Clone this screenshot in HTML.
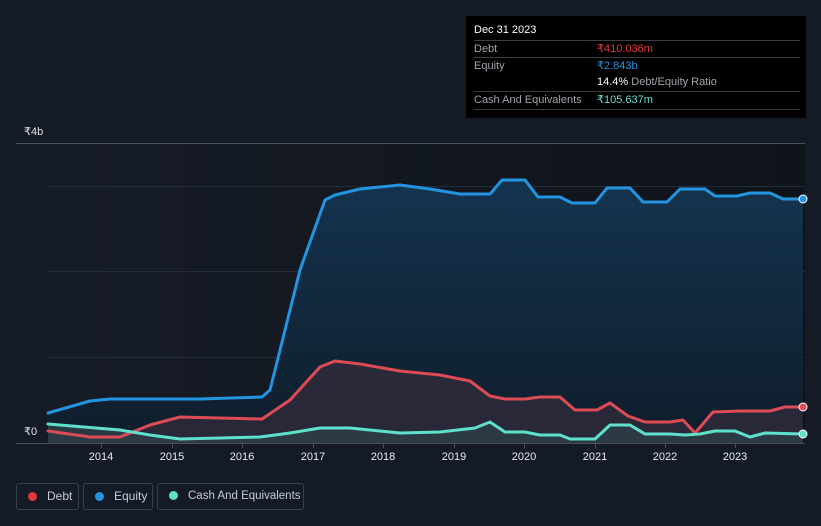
<!DOCTYPE html><html><head><style>
body{margin:0;width:821px;height:526px;background:#151b26;font-family:"Liberation Sans",sans-serif;overflow:hidden;position:relative}
.tt{position:absolute;left:466px;top:16px;width:340px;height:102px;background:#000;color:#fff;font-size:11px}
.tt .r{position:absolute;left:8px;width:326px;border-top:1px solid #3a3d44;height:16px;line-height:16px;color:#a0a4ab}
.leg{position:absolute;top:483px;height:27px;border:1px solid #3a404b;border-radius:3px;color:#c8ccd2;font-size:12px;line-height:25px;box-sizing:border-box;white-space:nowrap;overflow:hidden}
.leg i{display:inline-block;width:9px;height:9px;border-radius:50%;margin:0 10px 0 11px;vertical-align:-1px}
.yl{position:absolute;color:#e0e3e8;font-size:11px}
.xl{position:absolute;top:451px;color:#e8ebef;font-size:11px;width:40px;text-align:center}
</style></head><body>
<svg width="821" height="526" style="position:absolute;left:0;top:0">
<defs>
<linearGradient id="bg" x1="0" x2="1"><stop offset="0" stop-color="#161c26"/><stop offset="1" stop-color="#0f131a"/></linearGradient>
<linearGradient id="eq" x1="0" y1="0" x2="0" y2="1"><stop offset="0" stop-color="#14344f"/><stop offset="1" stop-color="#0f1d2b"/></linearGradient>
</defs>
<rect x="48" y="143" width="757" height="300" fill="url(#bg)"/>
<line x1="16" y1="143.5" x2="805" y2="143.5" stroke="#4a4f59"/>
<g stroke="#262d3a"><line x1="48" y1="186.5" x2="805" y2="186.5"/><line x1="48" y1="271.5" x2="805" y2="271.5"/><line x1="48" y1="357.5" x2="805" y2="357.5"/></g>
<polygon fill="url(#eq)" points="48,413 90,401 110,399 200,399 262,397 270,390 300,270 325,200 335,195 360,189 400,185 430,189 460,194 490,194 502,180 525,180 538,197 560,197 572,203 595,203 607,188 630,188 643,202 667,202 680,189 705,189 715,196 737,196 750,193 770,193 783,199 803,199 803,443 48,443"/>
<polygon fill="#2e2a3a" opacity="0.85" points="48,431 90,437 120,437 150,425 180,417 220,418 262,419 290,400 320,367 335,361 360,364 400,371 440,375 470,381 490,396 505,399 525,399 540,397 560,397 575,410 597,410 610,403 628,416 645,422 670,422 683,420 695,433 713,412 740,411 770,411 785,407 803,407 803,443 48,443"/>
<polygon fill="#2c3d45" opacity="0.9" points="48,424 120,430 150,435 180,439 260,437 290,433 320,428 350,428 400,433 440,432 475,428 490,422 505,432 525,432 540,435 560,435 570,439 595,439 610,425 630,425 645,434 670,434 685,435 700,434 715,431 735,431 750,437 765,433 803,434 803,443 48,443"/>
<g fill="none" stroke-width="3" stroke-linejoin="round" stroke-linecap="round">
<polyline stroke="#2394e0" points="48,413 90,401 110,399 200,399 262,397 270,390 300,270 325,200 335,195 360,189 400,185 430,189 460,194 490,194 502,180 525,180 538,197 560,197 572,203 595,203 607,188 630,188 643,202 667,202 680,189 705,189 715,196 737,196 750,193 770,193 783,199 803,199"/>
<polyline stroke="#dd4b55" points="48,431 90,437 120,437 150,425 180,417 220,418 262,419 290,400 320,367 335,361 360,364 400,371 440,375 470,381 490,396 505,399 525,399 540,397 560,397 575,410 597,410 610,403 628,416 645,422 670,422 683,420 695,433 713,412 740,411 770,411 785,407 803,407"/>
<polyline stroke="#5ee0cc" points="48,424 120,430 150,435 180,439 260,437 290,433 320,428 350,428 400,433 440,432 475,428 490,422 505,432 525,432 540,435 560,435 570,439 595,439 610,425 630,425 645,434 670,434 685,435 700,434 715,431 735,431 750,437 765,433 803,434"/>
</g>
<circle cx="803" cy="199" r="4" fill="#2394e0" stroke="#fff" stroke-width="1"/>
<circle cx="803" cy="407" r="4" fill="#dd4b55" stroke="#fff" stroke-width="1"/>
<circle cx="803" cy="434" r="4" fill="#5ee0cc" stroke="#fff" stroke-width="1"/>
<line x1="16" y1="443.5" x2="805" y2="443.5" stroke="#4a4f59"/>
<g stroke="#4a4f59"><line x1="101.5" y1="443" x2="101.5" y2="448"/><line x1="172.5" y1="443" x2="172.5" y2="448"/><line x1="242.5" y1="443" x2="242.5" y2="448"/><line x1="313.5" y1="443" x2="313.5" y2="448"/><line x1="383.5" y1="443" x2="383.5" y2="448"/><line x1="454.5" y1="443" x2="454.5" y2="448"/><line x1="524.5" y1="443" x2="524.5" y2="448"/><line x1="595.5" y1="443" x2="595.5" y2="448"/><line x1="665.5" y1="443" x2="665.5" y2="448"/><line x1="735.5" y1="443" x2="735.5" y2="448"/></g>
</svg>
<div class="yl" style="left:24px;top:125px">₹4b</div>
<div class="yl" style="left:24px;top:425px">₹0</div>
<div class="xl" style="left:81px">2014</div><div class="xl" style="left:152px">2015</div><div class="xl" style="left:222px">2016</div><div class="xl" style="left:293px">2017</div><div class="xl" style="left:363px">2018</div><div class="xl" style="left:434px">2019</div><div class="xl" style="left:504px">2020</div><div class="xl" style="left:575px">2021</div><div class="xl" style="left:645px">2022</div><div class="xl" style="left:715px">2023</div>
<div class="tt">
<div style="position:absolute;left:8px;top:8px;font-size:11px">Dec 31 2023</div>
<div class="r" style="top:24px">Debt<span style="position:absolute;left:123px;color:#e5383b">₹410.036m</span></div>
<div class="r" style="top:41px">Equity<span style="position:absolute;left:123px;color:#2394e0">₹2.843b</span></div>
<div class="r" style="top:58px;border:none"><span style="position:absolute;left:123px"><b style="color:#fff;font-weight:normal">14.4%</b> Debt/Equity Ratio</span></div>
<div class="r" style="top:75px">Cash And Equivalents<span style="position:absolute;left:123px;color:#5ee0cc">₹105.637m</span></div>
<div class="r" style="top:93px;height:0"></div>
</div>
<div class="leg" style="left:16px;width:63px"><i style="background:#e5383b"></i>Debt</div>
<div class="leg" style="left:83px;width:70px"><i style="background:#2394e0"></i>Equity</div>
<div class="leg" style="left:157px;width:147px;font-size:11.5px"><i style="background:#5ee0cc"></i>Cash And Equivalents</div>
</body></html>
